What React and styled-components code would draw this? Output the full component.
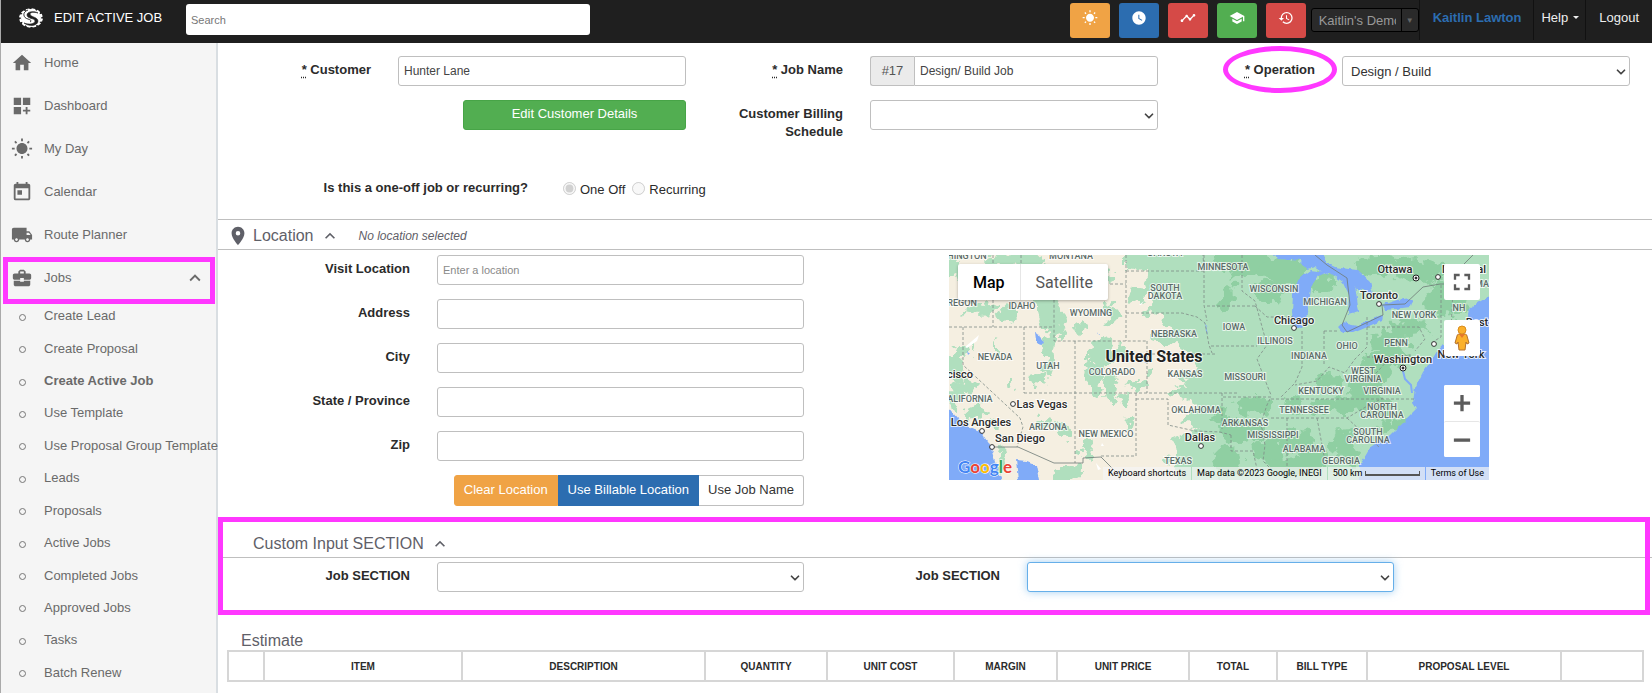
import React, { useState } from "react"
import styled, { createGlobalStyle } from "styled-components"
import {
    MdHome, MdDashboardCustomize, MdWbSunny, MdToday, MdLocalShipping, MdBusinessCenter,
    MdWatchLater, MdTimeline, MdSchool, MdHistory, MdPlace, MdKeyboardArrowUp,
    MdFullscreen, MdAdd, MdRemove,
} from "react-icons/md"
import { ChevronDown } from "lucide-react"

const mainLinks = [
    { label: 'Home', Icon: MdHome },
    { label: 'Dashboard', Icon: MdDashboardCustomize },
    { label: 'My Day', Icon: MdWbSunny },
    { label: 'Calendar', Icon: MdToday },
    { label: 'Route Planner', Icon: MdLocalShipping },
]

const jobLinks = [
    'Create Lead', 'Create Proposal', 'Create Active Job', 'Use Template',
    'Use Proposal Group Template', 'Leads', 'Proposals', 'Active Jobs',
    'Completed Jobs', 'Approved Jobs', 'Tasks', 'Batch Renew',
]

const quickButtons = [
    { label: 'My day', color: '#f0a345', Icon: MdWbSunny },
    { label: 'Time clock', color: '#2c6db0', Icon: MdWatchLater },
    { label: 'Activity', color: '#d54a47', Icon: MdTimeline },
    { label: 'Training', color: '#52ae51', Icon: MdSchool },
    { label: 'History', color: '#d54a47', Icon: MdHistory },
]

const locationFields = [
    { id: 'visit', label: 'Visit Location', placeholder: 'Enter a location' },
    { id: 'address', label: 'Address' },
    { id: 'city', label: 'City' },
    { id: 'state', label: 'State / Province' },
    { id: 'zip', label: 'Zip' },
]

const columns = [
    { label: '', width: 36 },
    { label: 'ITEM', width: 198 },
    { label: 'DESCRIPTION', width: 243 },
    { label: 'QUANTITY', width: 122 },
    { label: 'UNIT COST', width: 127 },
    { label: 'MARGIN', width: 103 },
    { label: 'UNIT PRICE', width: 132 },
    { label: 'TOTAL', width: 88 },
    { label: 'BILL TYPE', width: 90 },
    { label: 'PROPOSAL LEVEL', width: 194 },
    { label: '', width: 82 },
]

// x, y, text
const stateLabels = [
    [18, 4, 'HINGTON'], [122, 4, 'MONTANA'], [216, 1, 'DAKOTA'], [10, 51, 'OREGON'],
    [73, 54, 'IDAHO'], [142, 61, 'WYOMING'], [216, 36, 'SOUTH'], [216, 44, 'DAKOTA'],
    [274, 15, 'MINNESOTA'], [225, 82, 'NEBRASKA'], [46, 105, 'NEVADA'], [99, 114, 'UTAH'],
    [163, 120, 'COLORADO'], [236, 122, 'KANSAS'], [18, 147, 'CALIFORNIA'], [99, 175, 'ARIZONA'],
    [157, 182, 'NEW MEXICO'], [247, 158, 'OKLAHOMA'], [229, 209, 'TEXAS'],
    [325, 37, 'WISCONSIN'], [376, 50, 'MICHIGAN'], [285, 75, 'IOWA'], [326, 89, 'ILLINOIS'],
    [360, 104, 'INDIANA'], [398, 94, 'OHIO'], [447, 91, 'PENN'], [465, 63, 'NEW YORK'],
    [296, 125, 'MISSOURI'], [414, 119, 'WEST'], [414, 127, 'VIRGINIA'],
    [372, 139, 'KENTUCKY'], [433, 139, 'VIRGINIA'], [355, 158, 'TENNESSEE'],
    [433, 155, 'NORTH'], [433, 163, 'CAROLINA'], [296, 171, 'ARKANSAS'],
    [324, 183, 'MISSISSIPPI'], [419, 180, 'SOUTH'], [419, 188, 'CAROLINA'],
    [355, 197, 'ALABAMA'], [392, 209, 'GEORGIA'], [510, 56, 'NH'], [540, 32, 'MAINE'],
]

const cityLabels = [
    [11, 123, 'cisco'], [93, 153, 'Las Vegas'], [32, 171, 'Los Angeles'], [71, 187, 'San Diego'],
    [251, 186, 'Dallas'], [345, 69, 'Chicago'], [430, 44, 'Toronto'], [446, 18, 'Ottawa'],
    [515, 18, 'Montreal'], [454, 108, 'Washington'], [512, 103, 'New York'], [528, 71, 'Bost'],
]

const cityDots = [
    [64, 149], [33, 176], [43, 192], [252, 191], [345, 73], [430, 49], [489, 22], [485, 89],
]

const westForest = [
    [4, 14, 8, 12], [30, 55, 16, 6], [60, 58, 10, 8], [98, 54, 10, 20], [106, 66, 9, 16],
    [92, 30, 12, 20], [122, 20, 16, 8], [60, 6, 20, 8], [78, 4, 14, 9], [134, 72, 5, 6],
    [102, 88, 6, 10], [100, 104, 5, 16], [90, 124, 9, 8], [150, 98, 12, 14], [146, 122, 9, 16],
    [162, 132, 6, 16], [172, 98, 8, 8], [174, 146, 6, 6], [8, 110, 10, 16], [18, 132, 10, 10],
    [28, 158, 10, 8], [6, 140, 6, 14], [48, 168, 6, 5], [52, 205, 5, 14], [96, 168, 9, 5],
    [116, 176, 9, 7], [118, 220, 14, 8], [128, 214, 5, 10], [26, 92, 2, 8], [46, 94, 2, 8],
    [62, 128, 3, 7], [162, 58, 7, 10], [188, 40, 8, 8], [138, 196, 5, 6], [178, 170, 3, 5],
    [188, 130, 10, 4], [200, 118, 6, 5], [160, 20, 5, 6], [140, 190, 4, 4],
]

const eastForest = [
    [290, 6, 26, 14], [335, 16, 26, 14], [318, 38, 16, 10], [374, 30, 12, 10], [430, 10, 26, 10],
    [470, 16, 26, 12], [490, 44, 14, 18], [510, 40, 10, 22], [460, 72, 18, 8], [440, 86, 20, 10],
    [426, 112, 14, 16], [444, 100, 14, 9], [416, 134, 16, 14], [400, 150, 22, 8], [372, 152, 12, 8],
    [430, 152, 10, 12], [306, 150, 18, 8], [292, 176, 24, 12], [320, 196, 16, 12], [346, 186, 16, 12],
    [366, 202, 16, 12], [392, 184, 12, 10], [400, 200, 12, 10], [338, 212, 20, 8],
    [278, 206, 14, 14], [274, 164, 10, 10], [278, 42, 8, 16],
    [380, 126, 14, 8], [344, 150, 8, 8], [456, 166, 14, 6], [436, 172, 10, 6],
]

const stateLines = [
    'M44 0V72M0 72H105M72 0V14L105 42V86H198M177 0V86M161 29H177M177 16H255',
    'M177 58H233L248 62L256 68L260 90L263 98M198 99H266M198 86V138M75 138H290M75 72V138',
    'M14 72V110L71 163L74 172L68 192M126 86V208M187 138V201H151M187 144H219V170L246 176L271 177L282 180',
    'M255 0V50L258 66M258 51H306M255 16L254 0M293 0V36L306 46L312 68L318 90L308 104L318 130L322 140',
    'M262 91H308M306 51L318 62H344M353 76V112L346 128L332 142M375 76V110M375 76H390M418 62V72H470L476 84L466 96',
    'M418 72V92L406 104L396 118L380 112L368 126L346 130M273 138V174M274 142H322L318 150L312 168L316 190L314 206L322 214',
    'M322 144H466M322 163H398L420 150L434 143M338 163V222M368 163L376 206H412M398 163L412 176L430 192',
    'M282 180V196H304L308 214M406 116L418 128L440 104L462 100M418 102H462M492 30V82L482 88M504 34L502 76H520',
]

function Logo(){
    const teeth = Array.from({ length: 12 }, (_, i) => i * 30 + 15)
    return (
        <svg width="26" height="22" viewBox="-13 -11 26 22" aria-hidden="true">
            <g fill="#fff">
                <ellipse rx="10" ry="9" />
                {teeth.map(angle => (
                    <path key={angle} d="M-2 -8L-2 -10L1 -10L2 -8Z" transform={`scale(1.18 0.96) rotate(${angle})`} />
                ))}
            </g>
            <path
                d="M7 -5C4 -7 -4 -7 -4 -3C-4 1 4 0 4 3C4 6 -2 7 -7 5C-2 9 7 8 7 3C7 -1 -1 -1 -1 -4C-1 -6 4 -6 7 -5Z"
                fill="#1f1f1f" stroke="#1f1f1f" strokeWidth="0.6"
            />
            <path d="M-3 -8C-9 -6 -8 0 -3 1C0 2 1 3 -1 4" fill="none" stroke="#1f1f1f" strokeWidth="0.9" />
        </svg>
    )
}

function Pegman(){
    return (
        <svg width="18" height="28" viewBox="0 0 18 28" aria-hidden="true">
            <path d="M4 12C4 10 6 10 9 10C12 10 14 10 14 12L16 19L14 20L13 18L12 26H6L5 18L4 20L2 19Z" fill="#fbb02a" stroke="#b5712b" />
            <path d="M6 10L9 14L12 10Z" fill="#e5762c" />
            <circle cx="9" cy="6" r="4" fill="#fbb02a" stroke="#d98d1f" />
        </svg>
    )
}

function MapDrawing(){
    return (
        <MapSvg viewBox="0 0 540 225" preserveAspectRatio="xMidYMid slice" role="img" aria-label="Map of the United States">
            <defs>
                <filter id="rough" x="-5%" y="-5%" width="110%" height="110%">
                    <feTurbulence type="fractalNoise" baseFrequency="0.09" numOctaves="3" seed="4" />
                    <feDisplacementMap in="SourceGraphic" scale="22" xChannelSelector="R" yChannelSelector="G" />
                </filter>
                <filter id="coast" x="-5%" y="-5%" width="110%" height="110%">
                    <feTurbulence type="fractalNoise" baseFrequency="0.15" numOctaves="2" seed="2" />
                    <feDisplacementMap in="SourceGraphic" scale="5" xChannelSelector="R" yChannelSelector="G" />
                </filter>
            </defs>
            <rect width="540" height="225" fill="#f5efe1" />
            <g filter="url(#rough)">
                <path
                    d="M178 -20V15L200 18L190 34L206 45L195 55L215 62L222 75L200 82L225 92L240 98L252 110L224 120L240 128L220 138L250 150L232 165L245 175L225 185L222 205L235 245H570V-20Z"
                    fill="#b0dfbe"
                />
                {westForest.map(([x, y, rx, ry]) => <ellipse key={`${x}-${y}`} cx={x} cy={y} rx={rx} ry={ry} fill="#b0dfbe" />)}
                {eastForest.map(([x, y, rx, ry]) => <ellipse key={`${x}-${y}`} cx={x} cy={y} rx={rx} ry={ry} fill="#8fcfa2" />)}
            </g>
            <g fill="#80abf8" filter="url(#coast)">
                <path d="M-10 150L0 153L8 163L21 173L33 178L41 190L46 207L56 235H-10Z" />
                <path d="M67 205L78 206L88 210L93 235H70Z" />
                <path d="M86 77L91 79L95 88L91 90L87 85Z" />
                <path d="M318 -5H372L378 8L388 13L378 20L366 12L358 14L352 6L330 4Z" />
                <path d="M351 23L344 40L343 57L345 72L353 73L357 66L359 50L361 34L368 22L378 17L362 15Z" />
                <path d="M376 14L394 15L398 23L406 30L410 57L399 60L400 40L394 27Z" />
                <path d="M384 12L408 15L421 27L424 40L414 34L402 32Z" />
                <path d="M389 72L394 67L408 70L434 60L433 66L404 78L394 78Z" />
                <path d="M433 50L448 45L464 43L461 52L438 55Z" />
                <path d="M550 36L521 52L519 60L526 74L509 87L491 91L484 103L474 117L466 133L464 147L468 153L458 163L441 180L421 193L411 210V235H550Z" />
                <path d="M194 103L199 106L196 108ZM18 96L21 98L19 100ZM148 76L151 82L149 80ZM256 66L259 80L257 76Z" />
            </g>
            <path d="M453 112L456 124L462 130L463 138" fill="none" stroke="#80abf8" strokeWidth="2" />
            <path d="M16 92L30 80L28 86L18 93ZM190 50L195 46L192 50ZM147 208L152 214L149 215ZM153 188L155 191L152 191Z" fill="#fff" />
            <path d={stateLines.join('')} fill="none" stroke="#7f8b86" strokeDasharray="3 2" strokeWidth="0.8" />
            <path
                d="M43 192L69 192L105 208H134V203L152 202L168 218L171 225M366 0L378 10L398 23L401 50L393 70L398 77L434 60L433 50L456 49L474 32L491 29H540M512 29L514 10L524 0"
                fill="none" stroke="#6d7a76" strokeWidth="0.8"
            />
            <StateNames>
                {stateLabels.map(([x, y, text]) => <text key={`${x}-${y}`} x={x} y={y}>{text}</text>)}
            </StateNames>
            <CityNames>
                {cityLabels.map(([x, y, text]) => <text key={text} x={x} y={y}>{text}</text>)}
            </CityNames>
            {cityDots.map(([x, y]) => <circle key={x} cx={x} cy={y} r="2.4" fill="#fff" stroke="#333" />)}
            {[[467, 23], [454, 113]].map(([x, y]) => (
                <g key={x} stroke="#222">
                    <circle cx={x} cy={y} r="3" fill="#fff" />
                    <circle cx={x} cy={y} r="1" fill="#222" />
                </g>
            ))}
            <CountryName x="205" y="107">United States</CountryName>
            <GoogleMark x="9" y="218">
                <tspan fill="#4285f4">G</tspan>
                <tspan fill="#ea4335">o</tspan>
                <tspan fill="#fbbc04">o</tspan>
                <tspan fill="#4285f4">g</tspan>
                <tspan fill="#34a853">l</tspan>
                <tspan fill="#ea4335">e</tspan>
            </GoogleMark>
        </MapSvg>
    )
}

function Dropdown({ id, options = [''], active }){
    return (
        <SelectWrap>
            <Select id={id} $active={active}>
                {options.map(option => <option key={option}>{option}</option>)}
            </Select>
            <ChevronDown size={14} strokeWidth={3} />
        </SelectWrap>
    )
}

function App(){
    const [customer, setCustomer] = useState('Hunter Lane')
    const [jobName, setJobName] = useState('Design/ Build Job')

    return (
        <Page>
            <GlobalStyle />
            <TopBar>
                <Brand>
                    <Logo />
                    <Title>EDIT ACTIVE JOB</Title>
                </Brand>
                <Search type="search" placeholder="Search" aria-label="Search" />
                <QuickActions>
                    {quickButtons.map(({ label, color, Icon }) => (
                        <QuickButton key={label} aria-label={label} $color={color}><Icon size={16} /></QuickButton>
                    ))}
                </QuickActions>
                <Account>
                    <AccountSelect aria-label="Account">
                        <option>Kaitlin's Demo</option>
                    </AccountSelect>
                    <AccountArrow>▼</AccountArrow>
                </Account>
                <TopLink href="#profile" $user>Kaitlin Lawton</TopLink>
                <TopLink href="#help">Help <Caret /></TopLink>
                <TopLink href="#logout">Logout</TopLink>
            </TopBar>

            <Body>
                <Sidebar>
                    {mainLinks.map(({ label, Icon }) => (
                        <SideLink key={label} href="#menu">
                            <Icon size={22} />
                            {label}
                        </SideLink>
                    ))}
                    <SideLink href="#jobs" $marked>
                        <MdBusinessCenter size={22} />
                        Jobs
                        <MdKeyboardArrowUp size={22} />
                    </SideLink>
                    <SubList>
                        {jobLinks.map(label => (
                            <SubItem key={label}>
                                <SubLink href="#jobs" $current={label === 'Create Active Job'}>{label}</SubLink>
                            </SubItem>
                        ))}
                    </SubList>
                </Sidebar>

                <Main>
                    <JobForm>
                        <Label htmlFor="customer"><Required title="required">*</Required> Customer</Label>
                        <Input id="customer" value={customer} onChange={e => setCustomer(e.target.value)} />
                        <Label htmlFor="jobName"><Required title="required">*</Required> Job Name</Label>
                        <InputGroup>
                            <Addon>#17</Addon>
                            <Input id="jobName" value={jobName} onChange={e => setJobName(e.target.value)} />
                        </InputGroup>
                        <Label htmlFor="operation">
                            <Circled><Required title="required">*</Required> Operation</Circled>
                        </Label>
                        <Dropdown id="operation" options={['Design / Build']} />
                        <span />
                        <EditButton type="button">Edit Customer Details</EditButton>
                        <Label htmlFor="billing">Customer Billing Schedule</Label>
                        <Dropdown id="billing" />
                    </JobForm>
                    <Recurrence>
                        <Question>Is this a one-off job or recurring?</Question>
                        <RadioLabel><input type="radio" name="repeat" disabled defaultChecked />One Off</RadioLabel>
                        <RadioLabel><input type="radio" name="repeat" disabled />Recurring</RadioLabel>
                    </Recurrence>

                    <LocationHeader>
                        <MdPlace size={22} />
                        <Heading>Location</Heading>
                        <MdKeyboardArrowUp size={20} />
                        <em>No location selected</em>
                    </LocationHeader>
                    <LocationBody>
                        <Fields>
                            {locationFields.map(({ id, label, placeholder }) => (
                                <React.Fragment key={id}>
                                    <Label htmlFor={id}>{label}</Label>
                                    <Input id={id} placeholder={placeholder} />
                                </React.Fragment>
                            ))}
                            <ButtonGroup>
                                <GroupButton type="button" $color="#f0a345">Clear Location</GroupButton>
                                <GroupButton type="button" $color="#2c6db0">Use Billable Location</GroupButton>
                                <GroupButton type="button">Use Job Name</GroupButton>
                            </ButtonGroup>
                        </Fields>
                        <MapBox>
                            <MapDrawing />
                            <MapType>
                                <MapTypeButton type="button" $on>Map</MapTypeButton>
                                <MapTypeButton type="button">Satellite</MapTypeButton>
                            </MapType>
                            <MapControls>
                                <MapButton type="button" aria-label="Full screen"><MdFullscreen size={28} /></MapButton>
                                <MapButton type="button" aria-label="Street view"><Pegman /></MapButton>
                                <ZoomButtons>
                                    <MapButton type="button" aria-label="Zoom in"><MdAdd size={26} /></MapButton>
                                    <MapButton type="button" aria-label="Zoom out"><MdRemove size={26} /></MapButton>
                                </ZoomButtons>
                            </MapControls>
                            <MapFooter>
                                <span>Keyboard shortcuts</span>
                                <span>Map data ©2023 Google, INEGI</span>
                                <span>500 km <ScaleBar /></span>
                                <span>Terms of Use</span>
                            </MapFooter>
                        </MapBox>
                    </LocationBody>

                    <CustomSection>
                        <CustomHeader>
                            <Heading>Custom Input SECTION</Heading>
                            <MdKeyboardArrowUp size={20} />
                        </CustomHeader>
                        <CustomFields>
                            <Label htmlFor="section1">Job SECTION</Label>
                            <Dropdown id="section1" />
                            <Label htmlFor="section2">Job SECTION</Label>
                            <Dropdown id="section2" active />
                        </CustomFields>
                    </CustomSection>

                    <Estimate>
                        <Heading>Estimate</Heading>
                        <Table>
                            <colgroup>
                                {columns.map((col, i) => <Col key={i} $width={col.width} />)}
                            </colgroup>
                            <thead>
                                <tr>{columns.map((col, i) => <th key={i}>{col.label}</th>)}</tr>
                            </thead>
                        </Table>
                    </Estimate>
                </Main>
            </Body>
        </Page>
    )
}

export default App

const pink = '#ff38ff'

const GlobalStyle = createGlobalStyle`
   *, *::before, *::after {
      box-sizing: border-box;
   }
   body {
      margin: 0;
      font-family: "Liberation Sans", Arial, sans-serif;
      font-size: 13px;
      color: #2b2b2b;
      background-color: #fff;
   }
   input, select, button {
      font-family: inherit;
      font-size: inherit;
   }
   a {
      text-decoration: none;
   }
`

const Page = styled.div`
   display: flex;
   flex-direction: column;
   min-height: 100vh;
   border-left: 1px solid #aaaaaa;
`
const TopBar = styled.header`
   display: flex;
   align-items: flex-start;
   height: 43px;
   background-color: #1f1f1f;
`
const Brand = styled.div`
   display: flex;
   align-items: center;
   gap: 10px;
   width: 185px;
   height: 35px;
   padding-left: 17px;
`
const Title = styled.h1`
   margin: 0;
   font-size: 13px;
   font-weight: 400;
   color: #fff;
   white-space: nowrap;
`
const Search = styled.input`
   width: 404px;
   height: 31px;
   margin-top: 4px;
   padding: 0 5px;
   border: none;
   border-radius: 3px;
   background-color: #fff;
   font-size: 11px;

   &::placeholder {
      color: #777;
   }
`
const QuickActions = styled.div`
   display: flex;
   gap: 9px;
   margin: 3px 5px 0 auto;
`
const QuickButton = styled.button`
   display: flex;
   justify-content: center;
   width: 40px;
   height: 35px;
   padding: 7px 0 0;
   border: none;
   border-radius: 3px;
   background-color: ${props => props.$color};
   color: #fff;
`
const Account = styled.div`
   display: flex;
   width: 108px;
   height: 24px;
   margin-top: 8px;
   border: 1px solid #000;
   border-radius: 3px;
   background-color: #2a2a2a;
`
const AccountSelect = styled.select`
   appearance: none;
   flex: 1;
   min-width: 0;
   margin-right: 5px;
   padding: 0 0 0 7px;
   border: none;
   background: none;
   color: #999;
`
const AccountArrow = styled.span`
   width: 17px;
   border-left: 1px solid #000;
   color: #666;
   font-size: 8px;
   line-height: 24px;
   text-align: center;
`
const TopLink = styled.a`
   display: flex;
   align-items: center;
   gap: 5px;
   height: 40px;
   padding-bottom: 5px;
   padding-left: ${props => props.$user ? '13px' : '7px'};
   padding-right: ${props => props.$user ? '12px' : '6px'};
   border-left: 1px solid #111;
   font-weight: ${props => props.$user ? 700 : 400};
   color: ${props => props.$user ? '#2c6db0' : '#eee'};

   &:last-child {
      padding: 0 13px 5px;
   }
`
const Caret = styled.span`
   border: 3px solid transparent;
   border-top-color: #eee;
   border-bottom: none;
`

const Body = styled.div`
   display: flex;
   flex: 1;
`
const Sidebar = styled.nav`
   display: flex;
   flex-direction: column;
   flex: none;
   width: 217px;
   padding-bottom: 3px;
   border-right: 2px solid #d9dee2;
   background-color: #f5f5f5;
`
const SideLink = styled.a`
   position: relative;
   display: flex;
   align-items: center;
   gap: 11px;
   height: 43px;
   padding: 0 10px 4px;
   color: #6a6a6a;

   svg {
      flex: none;
   }

   svg:last-child:not(:first-child) {
      margin-left: auto;
   }

   &::after {
      content: '';
      display: ${props => props.$marked ? 'block' : 'none'};
      position: absolute;
      inset: -1px 1px -3px 2px;
      border: 5px solid ${pink};
   }
`
const SubList = styled.ul`
   display: grid;
   grid-auto-rows: 1fr;
   flex: 1;
   margin: 0;
   padding: 0;
   list-style: none;
`
const SubItem = styled.li`
   display: flex;
   align-items: center;
   gap: 18px;
   min-height: 32px;
   padding: 0 0 3px 18px;

   &::before {
      content: '';
      flex: none;
      width: 7px;
      height: 7px;
      margin-top: 3px;
      border: 1px solid #777;
      border-radius: 50%;
   }
`
const SubLink = styled.a`
   color: #6a6a6a;
   font-weight: ${props => props.$current ? 700 : 400};
   white-space: nowrap;
`

const Main = styled.main`
   flex: 1;
   min-width: 0;
`
const Label = styled.label`
   padding-top: 5px;
   font-weight: 700;
   line-height: 18px;
   text-align: right;
`
const Required = styled.abbr`
   text-decoration: underline dotted;
   text-underline-offset: 3px;
`
const Input = styled.input`
   width: 100%;
   height: 30px;
   padding: 0 5px;
   border: 1px solid #bfbfbf;
   border-radius: 3px;
   font-size: 12px;
   color: #444;

   &::placeholder {
      font-size: 11px;
      color: #8a8a8a;
   }
`
const InputGroup = styled.div`
   display: flex;

   ${Input} {
      flex: 1;
      border-radius: 0 3px 3px 0;
   }
`
const Addon = styled.span`
   width: 44px;
   border: 1px solid #bfbfbf;
   border-right: none;
   border-radius: 3px 0 0 3px;
   background-color: #ebebeb;
   color: #555;
   line-height: 28px;
   text-align: center;
`
const SelectWrap = styled.div`
   position: relative;

   svg {
      position: absolute;
      top: 9px;
      right: 2px;
      color: #444;
      pointer-events: none;
   }
`
const Select = styled.select`
   display: block;
   appearance: none;
   width: 100%;
   height: 30px;
   padding: 0 8px;
   border: 1px solid ${props => props.$active ? '#66afe9' : '#bfbfbf'};
   border-radius: 3px;
   background-color: #fff;
   box-shadow: ${props => props.$active ? '0 0 8px rgba(102, 175, 233, 0.6)' : 'none'};
   color: #333;
`
const Circled = styled.span`
   position: relative;

   &::after {
      content: '';
      position: absolute;
      inset: -16px -22px;
      border: 5px solid ${pink};
      border-radius: 50%;
   }
`
const JobForm = styled.form`
   display: grid;
   grid-template-columns: repeat(3, 130fr 288fr);
   gap: 14px 27px;
   padding: 13px 22px 0 23px;
`
const EditButton = styled.button`
   width: 223px;
   height: 30px;
   justify-self: end;
   padding: 0 0 3px;
   border: 1px solid #47a447;
   border-radius: 3px;
   background-color: #52ae51;
   color: #fff;
`
const Recurrence = styled.div`
   display: flex;
   align-items: center;
   height: 78px;
   padding-top: 19px;
`
const Question = styled.strong`
   width: 310px;
   margin: 0 35px 5px 0;
   text-align: right;
`
const RadioLabel = styled.label`
   display: flex;
   align-items: center;
   margin-right: 7px;

   input {
      width: 13px;
      height: 13px;
      margin: 0 4px 3px 0;
   }
`
const Heading = styled.h2`
   margin: 0;
   font-size: 16px;
   font-weight: 400;
   line-height: 18px;
   color: #5f6068;
`
const LocationHeader = styled.div`
   display: flex;
   align-items: center;
   height: 31px;
   padding: 2px 0 0 9px;
   border-top: 1px solid #bfbfbf;
   border-bottom: 1px solid #bfbfbf;
   color: #5f6068;

   h2 {
      margin: 0 6px 0 4px;
   }

   em {
      margin-left: 19px;
      font-size: 12px;
   }
`
const LocationBody = styled.div`
   display: grid;
   grid-template-columns: 586fr 540fr;
   column-gap: 145px;
   padding: 5px 163px 0 0;
`
const Fields = styled.div`
   display: grid;
   grid-template-columns: 192fr 367fr;
   gap: 14px 27px;
`
const ButtonGroup = styled.div`
   grid-column: 1 / -1;
   display: flex;
   justify-content: flex-end;
`
const GroupButton = styled.button`
   height: 31px;
   padding: 0 9px 3px;
   border: 1px solid ${props => props.$color || '#bfbfbf'};
   background-color: ${props => props.$color || '#fff'};
   color: ${props => props.$color ? '#fff' : '#333'};

   &:first-child {
      border-radius: 3px 0 0 3px;
   }

   &:last-child {
      border-left: none;
      border-radius: 0 3px 3px 0;
   }
`

const MapBox = styled.div`
   position: relative;
   height: 225px;
   overflow: hidden;
   font-family: Roboto, "Liberation Sans", sans-serif;
`
const MapSvg = styled.svg`
   display: block;
   width: 100%;
   height: 100%;
`
const StateNames = styled.g`
   font-size: 9px;
   font-weight: 500;
   text-anchor: middle;
   fill: #5b6b68;
   stroke: rgba(255, 255, 255, 0.7);
   stroke-width: 2px;
   paint-order: stroke;
`
const CityNames = styled.g`
   font-size: 11px;
   font-weight: 500;
   text-anchor: middle;
   fill: #2b2b2b;
   stroke: rgba(255, 255, 255, 0.8);
   stroke-width: 2px;
   paint-order: stroke;
`
const CountryName = styled.text`
   font-size: 16px;
   font-weight: 700;
   text-anchor: middle;
   fill: #222;
   stroke: rgba(255, 255, 255, 0.7);
   stroke-width: 2px;
   paint-order: stroke;
`
const GoogleMark = styled.text`
   font-family: Lato, sans-serif;
   font-size: 17px;
   font-weight: 700;
   stroke: #fff;
   stroke-width: 1px;
   paint-order: stroke;
`
const MapType = styled.div`
   position: absolute;
   top: 9px;
   left: 9px;
   display: flex;
   border-radius: 2px;
   background-color: #fff;
   box-shadow: 0 1px 3px rgba(0, 0, 0, 0.3);
`
const MapTypeButton = styled.button`
   height: 36px;
   padding: 0 15px;
   border: none;
   background: none;
   font-size: 16px;
   font-weight: ${props => props.$on ? 500 : 400};
   color: ${props => props.$on ? '#000' : '#565656'};

   & + & {
      border-left: 1px solid #e6e6e6;
   }
`
const MapControls = styled.div`
   position: absolute;
   top: 9px;
   right: 9px;
   display: flex;
   flex-direction: column;
   gap: 20px;
`
const MapButton = styled.button`
   display: flex;
   align-items: center;
   justify-content: center;
   width: 36px;
   height: 36px;
   padding: 0;
   border: none;
   border-radius: 2px;
   background-color: #fff;
   color: #5c5c5c;
`
const ZoomButtons = styled.div`
   margin-top: 9px;
   border-radius: 2px;
   background-color: #fff;

   button + button {
      border-top: 1px solid #e6e6e6;
   }

   path:last-child {
      stroke: #5c5c5c;
      stroke-width: 1px;
   }
`
const MapFooter = styled.div`
   position: absolute;
   right: 0;
   bottom: 0;
   display: flex;
   font-size: 9px;
   line-height: 13px;
   color: #000;

   span {
      padding: 0 5px;
      background-color: rgba(245, 245, 245, 0.7);
   }

   span + span {
      margin-left: 1px;
   }
`
const ScaleBar = styled.i`
   display: inline-block;
   width: 55px;
   height: 5px;
   border: 1px solid #555;
   border-top: none;
   border-bottom-width: 2px;
`

const CustomSection = styled.section`
   position: relative;
   height: 98px;
   margin-top: 11px;

   &::after {
      content: '';
      position: absolute;
      inset: 0 2px 0 0;
      border: 5px solid ${pink};
      pointer-events: none;
   }
`
const CustomHeader = styled.div`
   display: flex;
   align-items: center;
   gap: 6px;
   height: 41px;
   padding: 13px 0 0 35px;
   border-bottom: 1px solid #bfbfbf;
   color: #5f6068;
`
const CustomFields = styled.div`
   display: grid;
   grid-template-columns: 192fr 367fr 169fr 367fr;
   gap: 0 27px;
   padding: 4px 258px 0 0;
`
const Estimate = styled.section`
   padding: 17px 8px 11px 9px;

   h2 {
      margin-left: 14px;
   }
`
const Table = styled.table`
   width: 100%;
   border-collapse: collapse;
   table-layout: fixed;

   th {
      height: 30px;
      padding: 0;
      border: 2px solid #d6d6d6;
      font-size: 10px;
   }
`
const Col = styled.col`
   width: ${props => props.$width}px;
`
